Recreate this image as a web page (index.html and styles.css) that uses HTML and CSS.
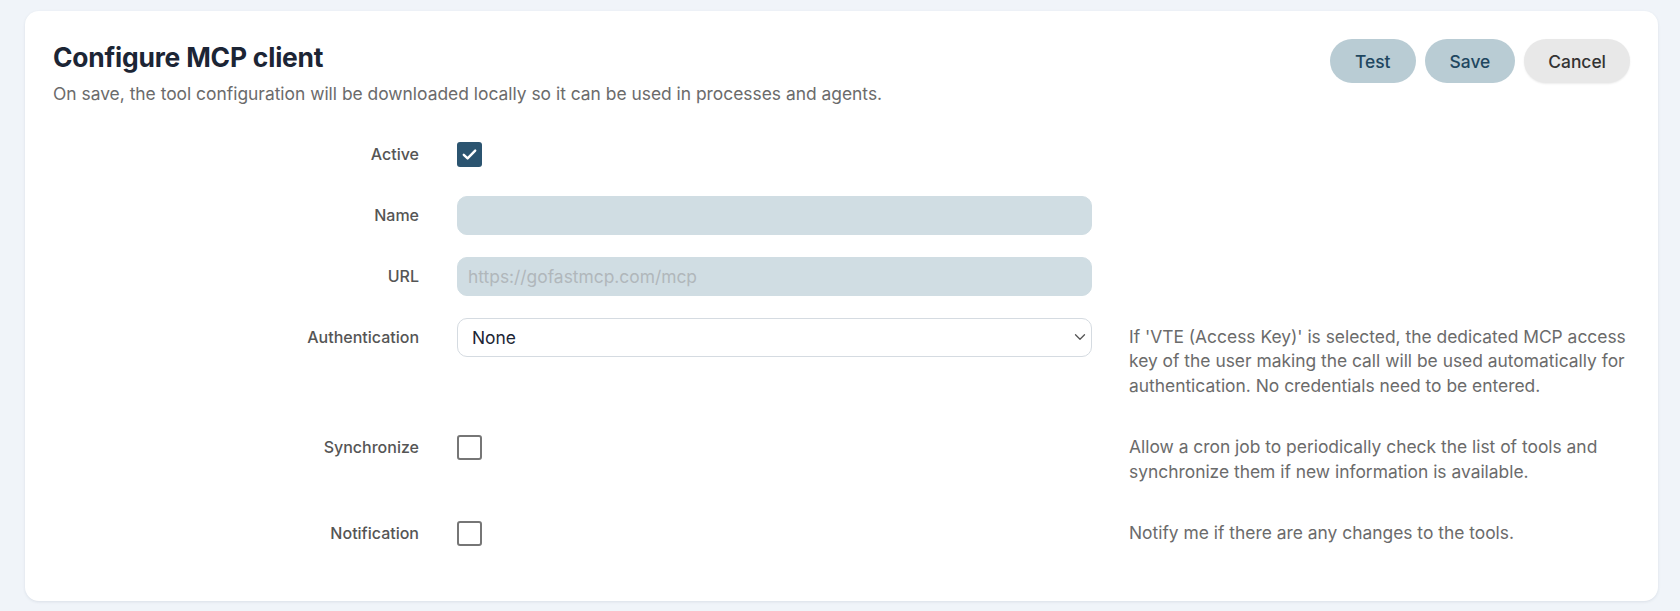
FILE: index.html
```html
<!DOCTYPE html>
<html lang="en">
<head>
<meta charset="utf-8">
<title>Configure MCP client</title>
<link rel="stylesheet" href="styles.css">
</head>
<body>
<div class="card">
  <div class="header">
    <div class="heading">
      <h1 class="title">Configure MCP client</h1>
      <p class="subtitle">On save, the tool configuration will be downloaded locally so it can be used in processes and agents.</p>
    </div>
    <div class="actions">
      <button class="btn btn-primary">Test</button>
      <button class="btn btn-primary">Save</button>
      <button class="btn btn-secondary">Cancel</button>
    </div>
  </div>

  <div class="form">
    <div class="row row-check">
      <label class="label">Active</label>
      <div class="field">
        <span class="checkbox checked">
          <svg viewBox="0 0 25 25" width="25" height="25"><path d="M6.8 12.8l3.8 3.6L18.2 8.6" fill="none" stroke="#fff" stroke-width="2.4" stroke-linecap="round" stroke-linejoin="round"/></svg>
        </span>
      </div>
      <div class="help"></div>
    </div>

    <div class="row">
      <label class="label">Name</label>
      <div class="field"><input class="input" type="text"></div>
      <div class="help"></div>
    </div>

    <div class="row">
      <label class="label">URL</label>
      <div class="field"><input class="input" type="text" placeholder="https://gofastmcp.com/mcp"></div>
      <div class="help"></div>
    </div>

    <div class="row">
      <label class="label">Authentication</label>
      <div class="field select-wrap">
        <select class="select"><option>None</option></select>
        <svg class="chevron" viewBox="0 0 12 8" width="12" height="8"><path d="M1.5 1.8l4.5 4.4 4.5-4.4" fill="none" stroke="#555" stroke-width="1.3" stroke-linecap="round" stroke-linejoin="round"/></svg>
      </div>
      <p class="help">If 'VTE (Access Key)' is selected, the dedicated MCP access key of the user making the call will be used automatically for authentication. No credentials need to be entered.</p>
    </div>

    <div class="row row-check">
      <label class="label">Synchronize</label>
      <div class="field"><span class="checkbox"></span></div>
      <p class="help">Allow a cron job to periodically check the list of tools and synchronize them if new information is available.</p>
    </div>

    <div class="row row-check">
      <label class="label">Notification</label>
      <div class="field"><span class="checkbox"></span></div>
      <p class="help">Notify me if there are any changes to the tools.</p>
    </div>
  </div>
</div>
</body>
</html>
```

FILE: styles.css
```css
* { box-sizing: border-box; }

html, body {
  margin: 0;
  padding: 0;
  background: #f0f4f9;
  font-family: Inter, "Noto Sans", "Liberation Sans", sans-serif;
}

body {
  padding: 11px 22px 10px 25px;
}

.card {
  background: #ffffff;
  border-radius: 14px;
  box-shadow: 0 1px 3px rgba(30, 50, 80, 0.10);
  padding: 28px 28px 40px 28px;
  min-height: 590px;
}

.header {
  display: flex;
  justify-content: space-between;
  align-items: flex-start;
}

.title {
  margin: 0;
  font-size: 26.4px;
  line-height: 34px;
  font-weight: 700;
  color: #1c2535;
  letter-spacing: -0.2px;
  padding-top: 1px;
}

.subtitle {
  margin: 8px 0 0 0;
  font-size: 17.4px;
  line-height: 24px;
  color: #6b6b6b;
}

.actions {
  display: flex;
  gap: 9px;
}

.btn {
  height: 44px;
  border: none;
  border-radius: 22px;
  font-family: inherit;
  font-size: 17.4px;
  font-weight: 500;
  padding: 0 25px;
  cursor: pointer;
}

.btn-primary {
  background: #b9ccd4;
  color: #1f4760;
}

.btn-secondary {
  background: #e8e8e8;
  color: #333333;
  box-shadow: 0 1px 2px rgba(0, 0, 0, 0.08);
  padding: 0 24px;
}

.form {
  margin-top: 28px;
  display: flex;
  flex-direction: column;
  gap: 21px;
}

.row {
  display: grid;
  grid-template-columns: 366px 635px 1fr;
  column-gap: 38px;
  align-items: start;
}

.label {
  text-align: right;
  font-size: 16px;
  line-height: 24px;
  font-weight: 500;
  color: #555555;
  padding-top: 8px;
}

.field {
  min-height: 40px;
  display: flex;
  align-items: center;
}

.help {
  margin: 0 0 8px -1px;
  padding-top: 8px;
  font-size: 17.4px;
  line-height: 24.4px;
  color: #6b6b6b;
}

.checkbox {
  width: 25px;
  height: 25px;
  border: 2px solid #767676;
  border-radius: 3px;
  display: inline-block;
  background: #fff;
}

.checkbox.checked {
  background: #2b5470;
  border: none;
  border-radius: 3px;
}

.checkbox svg {
  display: block;
}

.input {
  width: 100%;
  height: 39px;
  border: 1px solid #d0dde3;
  background: #d0dde3;
  border-radius: 10px;
  padding: 0 10px;
  font-family: inherit;
  font-size: 17.4px;
  color: #1c2535;
  outline: none;
}

.input::placeholder {
  color: #b0b7bb;
}

.select-wrap {
  position: relative;
}

.select {
  appearance: none;
  -webkit-appearance: none;
  width: 100%;
  height: 39px;
  border: 1px solid #d5dbe1;
  background: #ffffff;
  border-radius: 10px;
  padding: 0 14px;
  font-family: inherit;
  font-size: 17.4px;
  color: #1c2535;
  outline: none;
}

.chevron {
  position: absolute;
  right: 6px;
  top: 16px;
  pointer-events: none;
}
```
